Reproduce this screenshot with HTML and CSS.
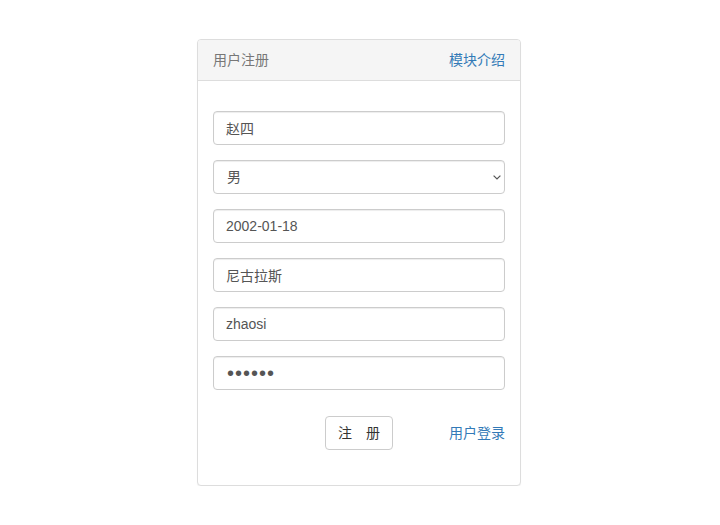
FILE: index.html
```html
<!DOCTYPE html>
<html lang="zh">
<head>
<meta charset="utf-8">
<title>用户注册</title>
<link rel="stylesheet" href="styles.css">
</head>
<body>
<div class="panel">
  <div class="panel-heading">
    <span class="panel-title">用户注册</span>
    <a class="link" href="#">模块介绍</a>
  </div>
  <form class="panel-body">
    <input class="form-control" type="text" value="赵四">
    <div class="select-wrap">
      <select class="form-control">
        <option selected>男</option>
        <option>女</option>
      </select>
      <svg class="chevron" width="8" height="5" viewBox="0 0 8 5" aria-hidden="true">
        <path d="M0.6 0.6 L4 4 L7.4 0.6" fill="none" stroke="#555" stroke-width="1.2"/>
      </svg>
    </div>
    <input class="form-control" type="text" value="2002-01-18">
    <input class="form-control" type="text" value="尼古拉斯">
    <input class="form-control" type="text" value="zhaosi">
    <input class="form-control password" type="password" value="123456">
    <div class="actions">
      <button class="btn" type="button">注　册</button>
      <a class="link login" href="#">用户登录</a>
    </div>
  </form>
</div>
</body>
</html>
```
FILE: styles.css
```css
html, body {
  margin: 0;
  padding: 0;
  background: #fff;
}
body {
  font-family: "Liberation Sans", "Noto Sans CJK SC", sans-serif;
  font-size: 14px;
  line-height: 20px;
  color: #333;
}
.panel {
  width: 324px;
  box-sizing: border-box;
  margin: 39px 0 0 197px;
  border: 1px solid #ddd;
  border-radius: 4px;
  background: #fff;
  box-shadow: 0 1px 1px rgba(0,0,0,0.05);
}
.panel-heading {
  display: flex;
  justify-content: space-between;
  align-items: center;
  padding: 10px 15px;
  background: #f5f5f5;
  border-bottom: 1px solid #ddd;
  border-radius: 3px 3px 0 0;
}
.panel-title {
  color: #777;
}
.link {
  color: #337ab7;
  text-decoration: none;
}
.panel-body {
  display: flex;
  flex-direction: column;
  gap: 15px;
  padding: 30px 15px 35px;
  margin: 0;
}
.form-control {
  display: block;
  width: 100%;
  height: 34px;
  box-sizing: border-box;
  margin: 0;
  padding: 6px 12px;
  font-family: "Liberation Sans", "Noto Sans CJK SC", sans-serif;
  font-size: 14px;
  line-height: 20px;
  color: #555;
  background: #fff;
  border: 1px solid #ccc;
  border-radius: 4px;
  box-shadow: inset 0 1px 1px rgba(0,0,0,0.075);
}
.select-wrap {
  position: relative;
}
select.form-control {
  appearance: none;
  -webkit-appearance: none;
  padding: 6px 12px 6px 13px;
}
.chevron {
  position: absolute;
  right: 4px;
  top: 15px;
  pointer-events: none;
}
.password {
  font-size: 20px;
  letter-spacing: 1px;
  padding-left: 13px;
}
.actions {
  position: relative;
  display: flex;
  justify-content: center;
  align-items: center;
  margin-top: 11px;
}
.btn {
  height: 34px;
  padding: 6px 12px;
  font-family: "Liberation Sans", "Noto Sans CJK SC", sans-serif;
  font-size: 14px;
  line-height: 20px;
  color: #333;
  background: #fff;
  border: 1px solid #ccc;
  border-radius: 4px;
}
.login {
  position: absolute;
  right: 0;
  top: 50%;
  transform: translateY(-50%);
}
```
